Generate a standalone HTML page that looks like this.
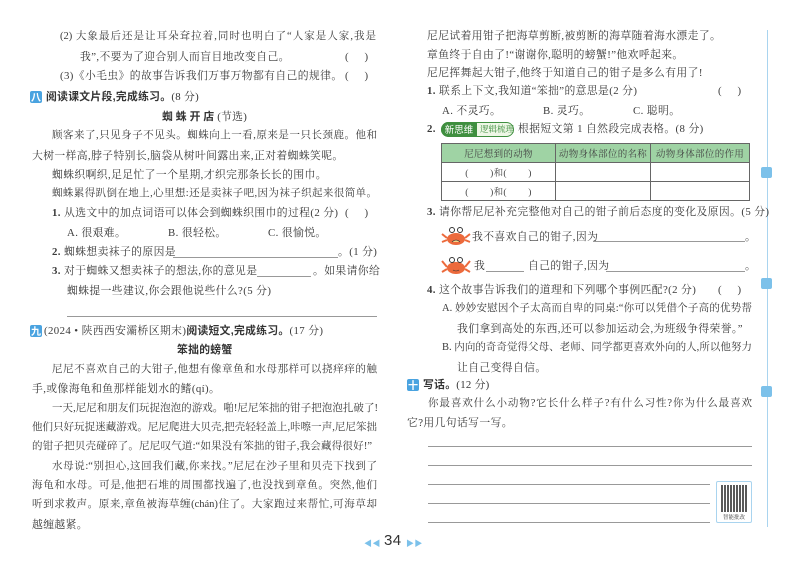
<!DOCTYPE html>
<html><head><meta charset="utf-8"><style>
*{margin:0;padding:0;box-sizing:border-box}
body{width:800px;height:564px;background:#fff;position:relative;overflow:hidden;font-family:"Liberation Serif","Noto Serif CJK SC",serif;color:#3a3a3a;font-size:10.8px}
.t{position:absolute;white-space:nowrap;line-height:16px;letter-spacing:0.4px}
.j{text-align:justify;text-align-last:justify;white-space:normal;height:16px;font-size:10.5px;letter-spacing:0}
.b{font-family:"Liberation Sans","Noto Sans CJK SC",sans-serif;font-weight:bold;color:#333;letter-spacing:0.3px}
.ln{position:absolute;height:1px;background:#999}
.ic{position:absolute;width:12px;height:12px;background:#4aa3e0;color:#fff;font-size:10px;line-height:12px;text-align:center;border-radius:2px;font-family:"Noto Sans CJK SC",sans-serif;font-weight:bold}
.tab{position:absolute;left:761px;width:11px;height:11px;background:#7cc1ea;border-radius:2px}
table{position:absolute;left:441px;top:143px;width:309px;border-collapse:collapse;font-size:9.5px;table-layout:fixed}
td{border:1px solid #666;height:19px;text-align:center;letter-spacing:0.3px;color:#444;white-space:nowrap;padding:0}
tr.h td{background:#9fd3a4}
</style></head><body>
<div style="position:absolute;left:767px;top:30px;width:1px;height:497px;background:#a9d4ef"></div>
<div class="tab" style="top:167px"></div><div class="tab" style="top:278px"></div><div class="tab" style="top:386px"></div>

<!-- LEFT -->
<div class="t j" style="left:60px;top:29px;width:316px">(2) 大象最后还是让耳朵耷拉着,同时也明白了“人家是人家,我是</div>
<div class="t" style="left:80px;top:49px">我”,不要为了迎合别人而盲目地改变自己。</div>
<div class="t" style="left:345px;top:49px">(&nbsp;&nbsp;&nbsp;&nbsp;&nbsp;)</div>
<div class="t" style="left:60px;top:68px">(3)《小毛虫》的故事告诉我们万事万物都有自己的规律。</div>
<div class="t" style="left:345px;top:68px">(&nbsp;&nbsp;&nbsp;&nbsp;&nbsp;)</div>
<div class="ic" style="left:30px;top:91px">八</div>
<div class="t b" style="left:46px;top:89px">阅读课文片段,完成练习。<span style="font-weight:normal;font-family:'Liberation Serif','Noto Serif CJK SC',serif">(8 分)</span></div>
<div class="t b" style="left:162px;top:109px;letter-spacing:3px">蜘蛛开店<span style="font-weight:normal;letter-spacing:0.3px;font-family:'Liberation Serif','Noto Serif CJK SC',serif">(节选)</span></div>
<div class="t j" style="left:52px;top:128px;width:325px">顾客来了,只见身子不见头。蜘蛛向上一看,原来是一只长颈鹿。他和</div>
<div class="t" style="left:32px;top:148px">大树一样高,脖子特别长,脑袋从树叶间露出来,正对着蜘蛛笑呢。</div>
<div class="t" style="left:52px;top:167px">蜘蛛织啊织,足足忙了一个星期,才织完那条长长的围巾。</div>
<div class="t j" style="left:52px;top:186px;width:325px">蜘蛛累得趴倒在地上,心里想:还是卖袜子吧,因为袜子织起来很简单。</div>
<div class="t" style="left:52px;top:205px"><b>1.</b> 从选文中的加点词语可以体会到蜘蛛织围巾的过程(2 分)</div>
<div class="t" style="left:345px;top:205px">(&nbsp;&nbsp;&nbsp;&nbsp;&nbsp;)</div>
<div class="t" style="left:67px;top:225px">A. 很艰难。</div>
<div class="t" style="left:168px;top:225px">B. 很轻松。</div>
<div class="t" style="left:268px;top:225px">C. 很愉悦。</div>
<div class="t" style="left:52px;top:244px"><b>2.</b> 蜘蛛想卖袜子的原因是</div><div class="ln" style="left:173px;top:257px;width:165px"></div>
<div class="t" style="left:338px;top:244px">。(1 分)</div>
<div class="t" style="left:52px;top:263px"><b>3.</b> 对于蜘蛛又想卖袜子的想法,你的意见是</div><div class="ln" style="left:257px;top:276px;width:54px"></div>
<div class="t" style="left:313px;top:263px">。如果请你给</div>
<div class="t" style="left:67px;top:283px">蜘蛛提一些建议,你会跟他说些什么?(5 分)</div>
<div class="ln" style="left:67px;top:316px;width:310px"></div>
<div class="ic" style="left:30px;top:325px">九</div>
<div class="t" style="left:44px;top:323px">(2024 • 陕西西安灞桥区期末)<span class="b">阅读短文,完成练习。</span>(17 分)</div>
<div class="t b" style="left:177px;top:342px">笨拙的螃蟹</div>
<div class="t j" style="left:52px;top:362px;width:325px">尼尼不喜欢自己的大钳子,他想有像章鱼和水母那样可以挠痒痒的触</div>
<div class="t" style="left:32px;top:381px">手,或像海龟和鱼那样能划水的鳍(qí)。</div>
<div class="t j" style="left:52px;top:401px;width:326px">一天,尼尼和朋友们玩捉泡泡的游戏。啪!尼尼笨拙的钳子把泡泡扎破了!</div>
<div class="t j" style="left:32px;top:420px;width:345px">他们只好玩捉迷藏游戏。尼尼爬进大贝壳,把壳轻轻盖上,咔嚓一声,尼尼笨拙</div>
<div class="t j" style="left:32px;top:439px;width:340px">的钳子把贝壳碰碎了。尼尼叹气道:“如果没有笨拙的钳子,我会藏得很好!”</div>
<div class="t j" style="left:52px;top:459px;width:325px">水母说:“别担心,这回我们藏,你来找。”尼尼在沙子里和贝壳下找到了</div>
<div class="t j" style="left:32px;top:478px;width:345px">海龟和水母。可是,他把石堆的周围都找遍了,也没找到章鱼。突然,他们</div>
<div class="t j" style="left:32px;top:497px;width:345px">听到求救声。原来,章鱼被海草缠(chán)住了。大家跑过来帮忙,可海草却</div>
<div class="t" style="left:32px;top:517px">越缠越紧。</div>
<div class="t" style="left:364px;top:536px;color:#7cc1ea;font-size:8px">◀◀</div>
<div class="t" style="left:384px;top:533px;font-family:'Liberation Sans',sans-serif;font-size:15px;color:#333">34</div>
<div class="t" style="left:406px;top:536px;color:#7cc1ea;font-size:8px">▶▶</div>

<!-- RIGHT -->
<div class="t" style="left:427px;top:28px">尼尼试着用钳子把海草剪断,被剪断的海草随着海水漂走了。</div>
<div class="t" style="left:427px;top:47px">章鱼终于自由了!“谢谢你,聪明的螃蟹!”他欢呼起来。</div>
<div class="t" style="left:427px;top:65px">尼尼挥舞起大钳子,他终于知道自己的钳子是多么有用了!</div>
<div class="t" style="left:427px;top:83px"><b>1.</b> 联系上下文,我知道“笨拙”的意思是(2 分)</div>
<div class="t" style="left:718px;top:83px">(&nbsp;&nbsp;&nbsp;&nbsp;&nbsp;)</div>
<div class="t" style="left:442px;top:103px">A. 不灵巧。</div>
<div class="t" style="left:543px;top:103px">B. 灵巧。</div>
<div class="t" style="left:633px;top:103px">C. 聪明。</div>
<div class="t" style="left:427px;top:121px"><b>2.</b></div>
<div style="position:absolute;left:441px;top:122px;width:73px;height:15px;border:1px solid #3f8f3f;border-radius:8px;background:#eef7e6"></div>
<div style="position:absolute;left:441px;top:122px;width:36px;height:15px;background:#3f8f3f;border-radius:8px 0 0 8px;color:#fff;font-size:9.5px;line-height:15px;text-align:center;font-family:'Noto Sans CJK SC',sans-serif">新思维</div>
<div class="t" style="left:480px;top:122px;font-size:8.5px;color:#3f8f3f;line-height:15px;letter-spacing:0">逻辑梳理</div>
<div class="t" style="left:518px;top:121px">根据短文第 1 自然段完成表格。(8 分)</div>
<table>
<colgroup><col style="width:114px"><col style="width:95px"><col></colgroup>
<tr class="h"><td>尼尼想到的动物</td><td>动物身体部位的名称</td><td>动物身体部位的作用</td></tr>
<tr><td>(&nbsp;&nbsp;&nbsp;&nbsp;&nbsp;&nbsp;&nbsp;&nbsp;)和(&nbsp;&nbsp;&nbsp;&nbsp;&nbsp;&nbsp;&nbsp;&nbsp;)</td><td></td><td></td></tr>
<tr><td>(&nbsp;&nbsp;&nbsp;&nbsp;&nbsp;&nbsp;&nbsp;&nbsp;)和(&nbsp;&nbsp;&nbsp;&nbsp;&nbsp;&nbsp;&nbsp;&nbsp;)</td><td></td><td></td></tr>
</table>
<div class="t" style="left:427px;top:204px"><b>3.</b> 请你帮尼尼补充完整他对自己的钳子前后态度的变化及原因。(5 分)</div>
<svg style="position:absolute;left:441px;top:226px" width="30" height="22" viewBox="0 0 30 22"><ellipse cx="15" cy="13" rx="9" ry="6" fill="#ec6a3c"/><path d="M6 12 L1 8 M6 14 L1 16 M24 12 L29 8 M24 14 L29 16" stroke="#ec6a3c" stroke-width="2"/><circle cx="11" cy="4" r="2.5" fill="#fff" stroke="#333"/><circle cx="19" cy="4" r="2.5" fill="#fff" stroke="#333"/><path d="M11 16 Q15 12 19 16" fill="#f7d58a" stroke="#333" stroke-width=".6"/></svg>
<div class="t" style="left:472px;top:229px">我不喜欢自己的钳子,因为</div><div class="ln" style="left:593px;top:241px;width:152px"></div><div class="t" style="left:745px;top:229px">。</div>
<svg style="position:absolute;left:441px;top:255px" width="30" height="22" viewBox="0 0 30 22"><ellipse cx="15" cy="13" rx="9" ry="6" fill="#ec6a3c"/><path d="M6 12 L1 6 M6 14 L1 17 M24 12 L29 6 M24 14 L29 17" stroke="#ec6a3c" stroke-width="2"/><circle cx="11" cy="5" r="2.5" fill="#fff" stroke="#333"/><circle cx="19" cy="5" r="2.5" fill="#fff" stroke="#333"/><path d="M12 15 Q15 17 18 15" fill="none" stroke="#333" stroke-width=".6"/></svg>
<div class="t" style="left:474px;top:258px">我</div><div class="ln" style="left:486px;top:271px;width:38px"></div>
<div class="t" style="left:528px;top:258px">自己的钳子,因为</div><div class="ln" style="left:606px;top:271px;width:139px"></div><div class="t" style="left:745px;top:258px">。</div>
<div class="t" style="left:427px;top:282px"><b>4.</b> 这个故事告诉我们的道理和下列哪个事例匹配?(2 分)</div>
<div class="t" style="left:718px;top:282px">(&nbsp;&nbsp;&nbsp;&nbsp;&nbsp;)</div>
<div class="t j" style="left:442px;top:301px;width:310px">A. 妙妙安慰因个子太高而自卑的同桌:“你可以凭借个子高的优势帮</div>
<div class="t" style="left:457px;top:321px">我们拿到高处的东西,还可以参加运动会,为班级争得荣誉。”</div>
<div class="t j" style="left:442px;top:340px;width:310px">B. 内向的奇奇觉得父母、老师、同学都更喜欢外向的人,所以他努力</div>
<div class="t" style="left:457px;top:360px">让自己变得自信。</div>
<div class="ic" style="left:407px;top:379px">十</div>
<div class="t b" style="left:423px;top:377px">写话。<span style="font-weight:normal;font-family:'Liberation Serif','Noto Serif CJK SC',serif">(12 分)</span></div>
<div class="t j" style="left:428px;top:396px;width:324px">你最喜欢什么小动物?它长什么样子?有什么习性?你为什么最喜欢</div>
<div class="t" style="left:407px;top:415px">它?用几句话写一写。</div>
<div class="ln" style="left:428px;top:446px;width:324px"></div>
<div class="ln" style="left:428px;top:465px;width:324px"></div>
<div class="ln" style="left:428px;top:484px;width:282px"></div>
<div class="ln" style="left:428px;top:503px;width:282px"></div>
<div class="ln" style="left:428px;top:522px;width:282px"></div>
<div style="position:absolute;left:716px;top:481px;width:36px;height:42px;border:1px solid #a9d4ef;border-radius:2px">
<div style="position:absolute;left:4px;top:3px;width:27px;height:27px;background:repeating-linear-gradient(90deg,#222 0 2px,#fff 2px 3px),#222;opacity:.75"></div>
<div style="position:absolute;left:0;top:31px;width:34px;font-size:5.5px;text-align:center;color:#333">智能批改</div></div>
</body></html>
